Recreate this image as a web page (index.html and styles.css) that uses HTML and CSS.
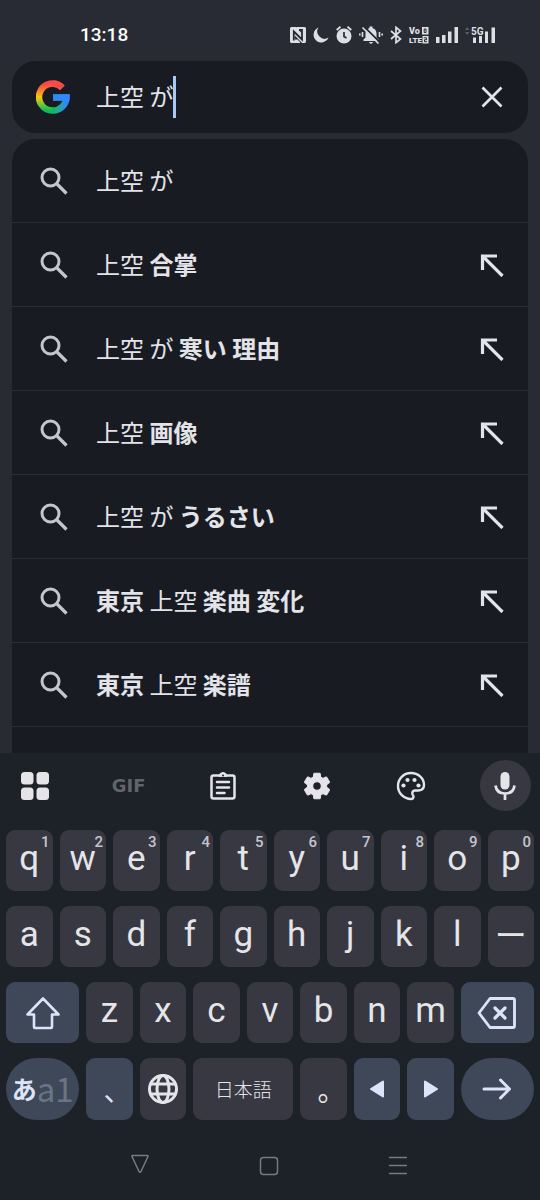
FILE: index.html
```html
<!DOCTYPE html>
<html lang="ja">
<head>
<meta charset="utf-8">
<meta name="viewport" content="width=device-width, initial-scale=1">
<title>検索</title>
<link rel="stylesheet" href="styles.css">
</head>
<body>
<svg class="sprite" aria-hidden="true">
  <symbol id="search" viewBox="0 0 28 28"><circle cx="10.5" cy="10.5" r="8.5" fill="none" stroke="currentColor" stroke-width="3"/><path d="M16.5 16.5 26.5 26.5" stroke="currentColor" stroke-width="3.2"/></symbol>
  <symbol id="insert" viewBox="0 0 24 24"><path d="M2.500 17V3H17M3 3.500 22.500 23" fill="none" stroke="currentColor" stroke-width="3.200"/></symbol>
</svg>
<div class="screen">
  <header class="status">
    <time class="clock">13:18</time>
    <div class="status-icons">
      <svg width="16" height="16" viewBox="0 0 16 16"><path fill="currentColor" d="M1.500 0H6L11.500 6V3.500H8.500L6.500 1.200V0H14.500Q16 0 16 1.500V14.500Q16 16 14.500 16H12L4.800 8.500V12.500H7.500L10 15V16H1.500Q0 16 0 14.500V1.500Q0 0 1.500 0Z"/><path d="M3.800 13.500V4.500L12 12.500V3H9" fill="none" stroke="#282b34" stroke-width="1.800"/></svg>
      <svg width="16" height="16" viewBox="0 0 16 16"><path fill="currentColor" d="M5.500.6A7.700 7.700 0 1 0 15.500 10.500 7.200 7.200 0 0 1 5.500.6Z"/></svg>
      <svg width="16" height="18" viewBox="0 0 16 18"><circle cx="8" cy="10" r="7.500" fill="currentColor"/><path d="M.7 4 4.500.8M11.500.8 15.300 4" stroke="currentColor" stroke-width="1.800"/><path d="M8 6V10.500L10.500 12" fill="none" stroke="#282b34" stroke-width="1.700"/></svg>
      <svg width="24" height="18" viewBox="0 0 24 18"><path fill="currentColor" d="M4.500 15V13.500L6.500 11.500V7Q7 3 10.500 2.300V.5H13.500V2.300Q17 3 17.500 7V11.500L19.500 13.500V15ZM10 16H14Q13.500 17.800 12 17.800T10 16Z"/><path d="M4.500 0 20 15.500" stroke="#282b34" stroke-width="1.800"/><path d="M3.500 1.500 19.500 17.500M3.500 6V11M20.500 6V11M.8 7.500V9.500M23.200 7.500V9.500" stroke="currentColor" stroke-width="1.600"/></svg>
      <svg width="12" height="18" viewBox="0 0 12 18"><path d="M1 5 10.500 13 6 16.700V1.300L10.500 5 1 13" fill="none" stroke="currentColor" stroke-width="1.700"/></svg>
      <svg width="20" height="18" viewBox="0 0 20 18"><g fill="currentColor" font-family="Roboto, sans-serif" font-weight="900" font-size="9"><text x="0" y="8">Vo</text><text x="0" y="17" font-size="8">LTE</text><rect x="13" y="1" width="6.500" height="7.500"/><rect x="13.500" y="10" width="6" height="7.500"/></g><path d="M15.200 3V6.500H17V3ZM14.800 11.800H17.500V13.700H15.500V15.700H18" fill="none" stroke="#282b34" stroke-width="1"/></svg>
      <svg width="22" height="16" viewBox="0 0 22 16"><path fill="currentColor" d="M0 10H3.500V16H0ZM6 8H9.500V16H6ZM12 4.500H15.500V16H12ZM18.500 0H22V16H18.500Z"/></svg>
      <svg width="30" height="18" viewBox="0 0 30 18"><path fill="#595c64" d="M0 4 2.200 1 4.500 4ZM0 6 2.200 9 4.500 6Z"/><text x="6" y="9" fill="currentColor" font-family="Roboto, sans-serif" font-weight="700" font-size="10">5G</text><path fill="currentColor" d="M8 11.500H11V17H8ZM14 10H17V17H14ZM20 5.500H23V17H20ZM26.500 1.500H30V17H26.500Z"/></svg>
    </div>
  </header>

  <main class="search">
    <form class="search-box" role="search">
      <svg class="logo" viewBox="0 0 34 34" aria-label="Google">
        <defs>
          <linearGradient id="g-left" x1="0" y1="0" x2="0" y2="1"><stop offset="0" stop-color="#f9474a"/><stop offset=".3" stop-color="#ff8a26"/><stop offset=".5" stop-color="#fcc60f"/><stop offset=".72" stop-color="#8cc52c"/><stop offset="1" stop-color="#0fbb57"/></linearGradient>
          <linearGradient id="g-top" x1="0" y1="0" x2="1" y2="0"><stop offset=".3" stop-color="#fc4a48" stop-opacity="0"/><stop offset=".7" stop-color="#fc4a48"/></linearGradient>
          <linearGradient id="g-bottom" x1="0" y1="0" x2="1" y2="0"><stop offset="0" stop-color="#0fbb57"/><stop offset=".4" stop-color="#22aa93"/><stop offset="1" stop-color="#3186ff"/></linearGradient>
        </defs>
        <path d="M26.300 7.700A13.500 13.500 0 1 0 17 30.500" fill="none" stroke="url(#g-left)" stroke-width="6.500"/>
        <path d="M26.300 7.700A13.500 13.500 0 0 0 7.500 7.500" fill="none" stroke="url(#g-top)" stroke-width="6.500"/>
        <path d="M16.500 30.500A13.500 13.500 0 0 0 30.500 17.500H17" fill="none" stroke="url(#g-bottom)" stroke-width="6.500"/>
        <path d="M17 14.300H33.500V20.500H17Z" fill="#3186ff"/>
      </svg>
      <input class="query" type="text" aria-label="検索キーワード" value="上空 が">
      <span class="caret"></span>
      <button class="clear" type="button" aria-label="クリア"><svg width="22" height="22" viewBox="0 0 22 22"><path d="M1.500 1.500 20.500 20.500M20.500 1.500 1.500 20.500" stroke="currentColor" stroke-width="2.700"/></svg></button>
    </form>

    <ul class="suggestions">
      <li class="row"><button class="suggestion"><svg class="glass"><use href="#search"/></svg><span>上空 が</span></button></li>
      <li class="row"><button class="suggestion"><svg class="glass"><use href="#search"/></svg><span>上空 <b>合掌</b></span></button><button class="insert" aria-label="入力欄に挿入"><svg class="arrow"><use href="#insert"/></svg></button></li>
      <li class="row"><button class="suggestion"><svg class="glass"><use href="#search"/></svg><span>上空 が <b>寒い 理由</b></span></button><button class="insert" aria-label="入力欄に挿入"><svg class="arrow"><use href="#insert"/></svg></button></li>
      <li class="row"><button class="suggestion"><svg class="glass"><use href="#search"/></svg><span>上空 <b>画像</b></span></button><button class="insert" aria-label="入力欄に挿入"><svg class="arrow"><use href="#insert"/></svg></button></li>
      <li class="row"><button class="suggestion"><svg class="glass"><use href="#search"/></svg><span>上空 が <b>うるさい</b></span></button><button class="insert" aria-label="入力欄に挿入"><svg class="arrow"><use href="#insert"/></svg></button></li>
      <li class="row"><button class="suggestion"><svg class="glass"><use href="#search"/></svg><span><b>東京</b> 上空 <b>楽曲 変化</b></span></button><button class="insert" aria-label="入力欄に挿入"><svg class="arrow"><use href="#insert"/></svg></button></li>
      <li class="row"><button class="suggestion"><svg class="glass"><use href="#search"/></svg><span><b>東京</b> 上空 <b>楽譜</b></span></button><button class="insert" aria-label="入力欄に挿入"><svg class="arrow"><use href="#insert"/></svg></button></li>
    </ul>
  </main>

  <section class="keyboard" aria-label="キーボード">
    <div class="toolbar">
      <button class="tool" aria-label="メニュー"><svg width="30" height="30" viewBox="0 0 30 30" fill="currentColor"><rect x="1" y="1" width="12.500" height="12.500" rx="3.500"/><rect x="16.500" y="1" width="12.500" height="12.500" rx="3.500"/><rect x="1" y="16.500" width="12.500" height="12.500" rx="3.500"/><rect x="16.500" y="16.500" width="12.500" height="12.500" rx="3.500"/></svg></button>
      <button class="tool gif">GIF</button>
      <button class="tool" aria-label="クリップボード"><svg width="26" height="30" viewBox="0 0 26 30" fill="none" stroke="currentColor" stroke-width="2.500" stroke-linecap="round"><rect x="1.500" y="4.500" width="23" height="23" rx="2"/><path d="M7 11H19M7 16.500H19M7 22H14.500"/><path d="M9 5Q9.500 1.500 13 1.500T17 5Z" fill="currentColor" stroke-width="1"/><circle cx="13" cy="4.500" r="1" fill="#1d2128" stroke="none"/></svg></button>
      <button class="tool" aria-label="設定"><svg width="32" height="32" viewBox="0 0 24 24"><path fill="currentColor" stroke="currentColor" stroke-width=".8" stroke-linejoin="round" fill-rule="evenodd" d="M19.140 12.940c.04-.3.060-.61.060-.94s-.02-.64-.07-.94l2.030-1.580a.5.500 0 0 0 .12-.61l-1.920-3.320a.5.500 0 0 0-.59-.22l-2.390.96a7 7 0 0 0-1.620-.94l-.36-2.540a.5.500 0 0 0-.48-.41h-3.840a.5.500 0 0 0-.47.410l-.36 2.540a7 7 0 0 0-1.620.94l-2.390-.96a.5.500 0 0 0-.59.220L2.740 8.870a.5.500 0 0 0 .12.610l2.030 1.580a7 7 0 0 0 0 1.880l-2.030 1.580a.5.500 0 0 0-.12.610l1.920 3.320c.12.220.37.290.59.220l2.390-.96c.5.380 1.030.7 1.620.94l.36 2.540c.05.240.24.410.48.410h3.840c.24 0 .44-.17.470-.41l.36-2.540a7 7 0 0 0 1.620-.94l2.390.96c.22.080.47 0 .59-.22l1.920-3.320a.5.500 0 0 0-.12-.61ZM12 15.200A3.200 3.200 0 1 1 12 8.800a3.200 3.200 0 0 1 0 6.400Z"/></svg></button>
      <button class="tool" aria-label="テーマ"><svg width="30" height="30" viewBox="0 0 30 30"><path d="M15 2C7.500 2 2 7.800 2 15S7.800 28 15 28Q17.500 28 17.500 25.500 17.500 24.500 16.500 23.500 15.500 20 19 19.500H22.500Q28 19 28 14C28 7 22 2 15 2Z" fill="none" stroke="currentColor" stroke-width="2.400"/><g fill="currentColor"><circle cx="7.500" cy="14.500" r="2.100"/><circle cx="11.500" cy="9" r="2.100"/><circle cx="18.500" cy="9" r="2.100"/><circle cx="22.500" cy="14.500" r="2.100"/></g></svg></button>
      <button class="tool mic" aria-label="音声入力"><svg width="24" height="30" viewBox="0 0 24 30"><rect x="7.500" y="1" width="9" height="17.500" rx="4.500" fill="currentColor"/><path d="M2.500 14.500Q3.500 22.500 12 22.500T21.500 14.500M12 22.500V29" fill="none" stroke="currentColor" stroke-width="2.700"/></svg></button>
    </div>

    <div class="keys">
      <button class="key">q<sup>1</sup></button><button class="key">w<sup>2</sup></button><button class="key">e<sup>3</sup></button><button class="key">r<sup>4</sup></button><button class="key">t<sup>5</sup></button><button class="key">y<sup>6</sup></button><button class="key">u<sup>7</sup></button><button class="key">i<sup>8</sup></button><button class="key">o<sup>9</sup></button><button class="key">p<sup>0</sup></button>
      <button class="key">a</button><button class="key">s</button><button class="key">d</button><button class="key">f</button><button class="key">g</button><button class="key">h</button><button class="key">j</button><button class="key">k</button><button class="key">l</button><button class="key kana dash">ー</button>
      <button class="key wide accent" aria-label="シフト"><svg width="36" height="34" viewBox="0 0 36 34"><path d="M18 2.500 33.500 18.500H27V31Q27 32 26 32H10Q9 32 9 31V18.500H2.500Z" fill="none" stroke="currentColor" stroke-width="2.600" stroke-linejoin="round"/></svg></button>
      <button class="key">z</button><button class="key">x</button><button class="key">c</button><button class="key">v</button><button class="key">b</button><button class="key">n</button><button class="key">m</button>
      <button class="key wide accent" aria-label="削除"><svg width="40" height="34" viewBox="0 0 40 34" fill="none" stroke="currentColor" stroke-width="2.800" stroke-linejoin="round" stroke-linecap="round"><path d="M13 2.500H36Q37.500 2.500 37.500 4V30Q37.500 31.500 36 31.500H13L2 17Z"/><path d="M18 12 28 22M28 12 18 22" stroke-width="3.200"/></svg></button>
      <button class="key wide tall accent round mode"><b>あ</b><span>a1</span></button>
      <button class="key tall accent kana mark">、</button>
      <button class="key tall" aria-label="言語切り替え"><svg width="32" height="32" viewBox="0 0 32 32" fill="none" stroke="currentColor" stroke-width="3"><circle cx="16" cy="16" r="13.500"/><ellipse cx="16" cy="16" rx="6" ry="13.500"/><path d="M3.500 11H28.500M3.500 21H28.500"/></svg></button>
      <button class="key space tall">日本語</button>
      <button class="key tall kana mark">。</button>
      <button class="key tall accent" aria-label="左へ"><svg width="16" height="20" viewBox="0 0 16 20"><path d="M2 10 14 2.500V17.500Z" fill="currentColor" stroke="currentColor" stroke-width="2" stroke-linejoin="round"/></svg></button>
      <button class="key tall accent" aria-label="右へ"><svg width="16" height="20" viewBox="0 0 16 20"><path d="M14 10 2 2.500V17.500Z" fill="currentColor" stroke="currentColor" stroke-width="2" stroke-linejoin="round"/></svg></button>
      <button class="key wide tall accent round" aria-label="検索"><svg width="30" height="22" viewBox="0 0 30 22"><path d="M2 11H27M18.500 2 27.500 11 18.500 20" fill="none" stroke="currentColor" stroke-width="3" stroke-linecap="round" stroke-linejoin="round"/></svg></button>
    </div>

    <nav class="system-nav">
      <button aria-label="戻る"><svg width="20" height="24" viewBox="0 0 20 24"><path d="M2.500 1.500H17.500Q18.500 1.500 18 2.500L11 17.500Q10 19 9 17.500L2 2.500Q1.500 1.500 2.500 1.500Z"/></svg></button>
      <button aria-label="ホーム"><svg width="20" height="20" viewBox="0 0 20 20"><rect x="1.500" y="1.500" width="17" height="17" rx="3"/></svg></button>
      <button aria-label="履歴"><svg width="18" height="20" viewBox="0 0 18 20"><path d="M0 1.500H18M0 9.500H18M0 17.500H18"/></svg></button>
    </nav>
  </section>
</div>
</body>
</html>
```
FILE: styles.css
```css
* { box-sizing: border-box; }

body {
  margin: 0;
  background: #282b34;
  color: #e3e4ea;
  font-family: "Noto Sans CJK JP", sans-serif;
}

button, input {
  margin: 0;
  padding: 0;
  border: 0;
  background: none;
  color: inherit;
  font: inherit;
  outline: 0;
}

button {
  display: flex;
  align-items: center;
  justify-content: center;
}

svg { display: block; flex: none; }
.sprite { position: absolute; width: 0; height: 0; }

.screen {
  display: flex;
  flex-direction: column;
  height: 100vh;
}

.status {
  display: flex;
  align-items: center;
  justify-content: space-between;
  height: 61px;
  padding: 8px 45px 0 80px;
}

.clock {
  color: #fff;
  font: 500 19px/20px Roboto, sans-serif;
}

.status-icons {
  display: flex;
  align-items: center;
  gap: 7px;
  color: #dedfe4;
}

.search {
  display: flex;
  flex: 1 1 0;
  flex-direction: column;
  gap: 6px;
  min-height: 0;
  padding: 0 12px;
  font-size: 24px;
}

.search-box {
  display: flex;
  flex: none;
  align-items: center;
  height: 72px;
  padding: 0 24px;
  border-radius: 24px;
  background: #191b22;
}

.logo {
  width: 34px;
  height: 34px;
  margin-right: 26px;
}

.query {
  field-sizing: content;
  height: 48px;
  padding-bottom: 3px;
}

.caret {
  width: 3px;
  height: 42px;
  background: #a8c7fa;
}

.clear {
  width: 24px;
  height: 48px;
  margin-left: auto;
}

.suggestions {
  flex: 1;
  min-height: 0;
  margin: 0;
  padding: 0;
  overflow: hidden;
  border-radius: 24px 24px 0 0;
  background: #191b22;
  list-style: none;
}

.row {
  display: flex;
  height: 84px;
  border-bottom: 1px solid #2b2e36;
}

.suggestion {
  flex: 1;
  justify-content: flex-start;
  gap: 28px;
  padding-left: 28px;
}

.suggestion span { padding-bottom: 2px; }
.suggestion b { font-weight: 700; }

.glass {
  width: 28px;
  height: 28px;
  color: #c3c6d0;
}

.insert { width: 72px; }
.arrow { width: 24px; height: 24px; }

.keyboard {
  flex: none;
  background: #1d2128;
  color: #e5e5e9;
}

.toolbar {
  display: flex;
  align-items: center;
  justify-content: space-between;
  height: 65px;
  padding: 0 9px;
}

.tool { width: 51px; height: 51px; }

.gif {
  color: #61646c;
  font: 700 18px/20px "DejaVu Sans", sans-serif;
}

.mic {
  border-radius: 50%;
  background: #373841;
}

.keys {
  display: grid;
  grid-template-columns: repeat(20, minmax(0, 1fr));
  gap: 15px 7px;
  padding: 12px 6px 0;
}

.key {
  position: relative;
  grid-column: span 2;
  height: 61px;
  padding-bottom: 4px;
  border-radius: 9px;
  background: #373841;
  font: 400 35px/40px Roboto, sans-serif;
}

.key sup {
  position: absolute;
  top: 4px;
  right: 3px;
  color: #c3c6d0;
  font-size: 15px;
  font-weight: 500;
  line-height: 16px;
}

.key.wide { grid-column: span 3; padding-bottom: 0; }
.key.tall { height: 62px; padding-bottom: 0; }
.key.accent { background: #3f4859; color: #dce3fa; }
.key.round { border-radius: 32px; }
.key.kana { font-family: "Noto Sans CJK JP", sans-serif; font-size: 28px; }
.key.dash { padding-bottom: 8px; font-size: 32px; }
.key.mark { padding-left: 16px; }

.key.space {
  grid-column: span 4;
  font-family: "Noto Sans CJK JP", sans-serif;
  font-size: 19px;
  font-weight: 300;
}

.key.mode {
  padding-bottom: 2px;
  font-family: "Noto Sans CJK JP", sans-serif;
  font-size: 25px;
}

.mode span {
  color: #6b7485;
  font-size: 33px;
}

.system-nav {
  display: flex;
  align-items: center;
  justify-content: center;
  height: 80px;
  padding: 12px 2px 0 0;
}

.system-nav button { width: 24%; height: 48px; }

.system-nav svg {
  fill: none;
  stroke: #777a81;
  stroke-width: 1.5;
}
```
